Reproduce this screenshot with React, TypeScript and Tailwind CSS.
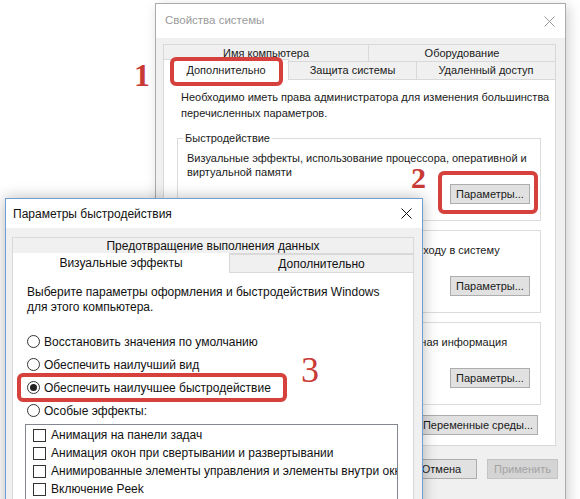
import type { FunctionComponent, ReactNode } from 'react'
import clsx from 'clsx'

function CloseIcon({ className }: { className?: string }) {
  return (
    <svg width="11" height="11" viewBox="0 0 11 11" className={className}>
      <path d="M0.5 0.5 L10.5 10.5 M10.5 0.5 L0.5 10.5" stroke="currentColor" strokeWidth="1" fill="none" />
    </svg>
  )
}

function Btn({ children, className, disabled }: { children: ReactNode; className?: string; disabled?: boolean }) {
  return (
    <div
      className={clsx(
        'shrink-0 flex items-center justify-center h-[20px] border whitespace-nowrap',
        disabled ? 'bg-[#d4d4d4] border-[#c4c4c4] text-[#a3a3a3]' : 'bg-[#e1e1e1] border-[#adadad] text-[#1a1a1a]',
        className,
      )}
    >
      {children}
    </div>
  )
}

function Group({ title, lines }: { title: string; lines: string[] }) {
  return (
    <fieldset className="shrink-0 min-w-0 ml-[13px] w-[364px] border border-[#dcdcdc] pl-[9px] pr-[10px] pb-[16px] mt-[2px] first:mt-0">
      <legend className="-ml-[4px] px-[2px] leading-[15px] text-[#1a1a1a]">{title}</legend>
      <div className="pt-[5px] flex flex-col">
        <div className="h-[28px] leading-[14px] text-[#1a1a1a]">
          {lines.map((l) => (
            <div key={l} className="whitespace-nowrap">{l}</div>
          ))}
        </div>
        <Btn className="ml-auto mt-[5px] w-[80px]">Параметры...</Btn>
      </div>
    </fieldset>
  )
}

function Radio({ label, checked }: { label: string; checked?: boolean }) {
  return (
    <div className="shrink-0 h-[23px] flex items-center">
      <div className="w-[13px] h-[13px] rounded-full border border-[#333] bg-white flex items-center justify-center">
        {checked && <div className="w-[7px] h-[7px] rounded-full bg-[#222]" />}
      </div>
      <span className="ml-[4px] whitespace-nowrap">{label}</span>
    </div>
  )
}

function Check({ label }: { label: string }) {
  return (
    <div className="shrink-0 h-[18px] flex items-center pl-[7px]">
      <div className="w-[13px] h-[13px] border border-[#333] bg-white shrink-0" />
      <span className="ml-[5px] whitespace-nowrap">{label}</span>
    </div>
  )
}

function SystemProperties() {
  return (
    <div className="absolute left-[155px] top-[3px] w-[411px] h-[520px] overflow-hidden bg-[#f0f0f0] border border-[#ababab] shadow-[3px_3px_12px_rgba(0,0,0,0.18)] flex flex-col text-[11px]">
      <div className="shrink-0 h-[34px] bg-white flex items-center justify-between pl-[9px] pr-[10px] text-[#9a9a9a]">
        <span className="text-[11.5px]">Свойства системы</span>
        <CloseIcon />
      </div>
      <div className="shrink-0 pl-[7px] pr-[9px] pt-[6px] flex flex-col text-[#1a1a1a]">
        <div className="shrink-0 flex h-[18px]">
          <div className="w-[206px] border border-[#d9d9d9] flex items-center justify-center">Имя компьютера</div>
          <div className="flex-1 -ml-px border border-[#d9d9d9] flex items-center justify-center">Оборудование</div>
        </div>
        <div className="shrink-0 flex items-end h-[18px] -mt-px">
          <div className="relative z-10 w-[126px] h-[21px] -mb-px bg-white border border-b-0 border-[#d9d9d9] flex items-center justify-center">Дополнительно</div>
          <div className="w-[129px] h-[18px] -ml-px border border-b-0 border-[#d9d9d9] flex items-center justify-center">Защита системы</div>
          <div className="flex-1 h-[18px] -ml-px border border-b-0 border-[#d9d9d9] flex items-center justify-center">Удаленный доступ</div>
        </div>
        <div className="shrink-0 h-[367px] bg-white border border-[#d9d9d9] pt-[9px] flex flex-col">
          <div className="pl-[17px] leading-[16px]">
            <div className="whitespace-nowrap">Необходимо иметь права администратора для изменения большинства</div>
            <div className="whitespace-nowrap">перечисленных параметров.</div>
          </div>
          <div className="mt-[10px] flex flex-col">
            <Group title="Быстродействие" lines={['Визуальные эффекты, использование процессора, оперативной и', 'виртуальной памяти']} />
            <Group title="Профили пользователей" lines={['Параметры рабочего стола, относящиеся ко входу в систему']} />
            <Group title="Загрузка и восстановление" lines={['Загрузка и восстановление системы, отладочная информация']} />
          </div>
          <Btn className="self-end mr-[17px] mt-[10px] w-[120px]">Переменные среды...</Btn>
        </div>
        <div className="shrink-0 flex justify-end gap-[10px] mt-[13px] -mr-[2px]">
          <Btn className="w-[71px]">ОК</Btn>
          <Btn className="w-[71px]">Отмена</Btn>
          <Btn className="w-[71px]" disabled>Применить</Btn>
        </div>
      </div>
    </div>
  )
}

function PerformanceOptions() {
  return (
    <div className="absolute left-[5px] top-[198px] w-[418px] h-[320px] overflow-hidden bg-[#f0f0f0] border border-[#6d9fd6] shadow-[0_0_14px_rgba(0,0,0,0.28)] flex flex-col text-[12px] text-[#111]">
      <div className="shrink-0 h-[29px] bg-white flex items-center justify-between pl-[7px] pr-[10px]">
        <span>Параметры быстродействия</span>
        <CloseIcon />
      </div>
      <div className="shrink-0 pl-[6px] pr-[8px] pt-[9px] flex flex-col">
        <div className="shrink-0 h-[17px] border border-[#d9d9d9] flex items-center justify-center">
          Предотвращение выполнения данных
        </div>
        <div className="shrink-0 flex items-end h-[18px]">
          <div className="relative z-10 w-[218px] h-[20px] -mb-px bg-white border border-t-0 border-b-0 border-[#d9d9d9] flex items-center justify-center">
            Визуальные эффекты
          </div>
          <div className="flex-1 h-[18px] border border-l-0 border-b-0 border-[#d9d9d9] flex items-center justify-center">
            Дополнительно
          </div>
        </div>
        <div className="shrink-0 h-[300px] bg-white border border-[#d9d9d9] pt-[12px] pl-[14px] flex flex-col overflow-hidden">
          <div className="shrink-0 leading-[15px]">
            <div className="whitespace-nowrap">Выберите параметры оформления и быстродействия Windows</div>
            <div className="whitespace-nowrap">для этого компьютера.</div>
          </div>
          <div className="shrink-0 mt-[15px] flex flex-col">
            <Radio label="Восстановить значения по умолчанию" />
            <Radio label="Обеспечить наилучший вид" />
            <Radio label="Обеспечить наилучшее быстродействие" checked />
            <Radio label="Особые эффекты:" />
          </div>
          <div className="shrink-0 -ml-[2px] mt-[2px] w-[373px] h-[120px] border border-[#828790] pt-[1px] overflow-hidden">
            <Check label="Анимация на панели задач" />
            <Check label="Анимация окон при свертывании и развертывании" />
            <Check label="Анимированные элементы управления и элементы внутри окна" />
            <Check label="Включение Peek" />
          </div>
        </div>
      </div>
    </div>
  )
}

export default function App(): ReturnType<FunctionComponent> {
  return (
    <div className="relative w-[580px] h-[499px] overflow-hidden bg-white font-['Liberation_Sans',Arial,sans-serif]">
      <SystemProperties />
      <PerformanceOptions />

      {/* red callouts */}
      <div className="absolute z-20 left-[170px] top-[57px] w-[113px] h-[29px] border-[4px] border-[#d6403d] rounded-[6px]" />
      <div className="absolute z-20 left-[438px] top-[171px] w-[100px] h-[43px] border-[4px] border-[#d6403d] rounded-[6px]" />
      <div className="absolute z-20 left-[17px] top-[373px] w-[270px] h-[29px] border-[4px] border-[#d6403d] rounded-[6px]" />

      <span className="absolute z-20 left-[134px] top-[59px] text-[32px] leading-none font-bold text-[#c93a36] font-['Liberation_Serif',serif]">1</span>
      <span className="absolute z-20 left-[411px] top-[163px] text-[30px] leading-none font-bold text-[#c93a36] font-['Liberation_Serif',serif]">2</span>
      <span className="absolute z-20 left-[301px] top-[352px] text-[36px] leading-none text-[#c93a36] font-['Liberation_Serif',serif]">3</span>
    </div>
  )
}
